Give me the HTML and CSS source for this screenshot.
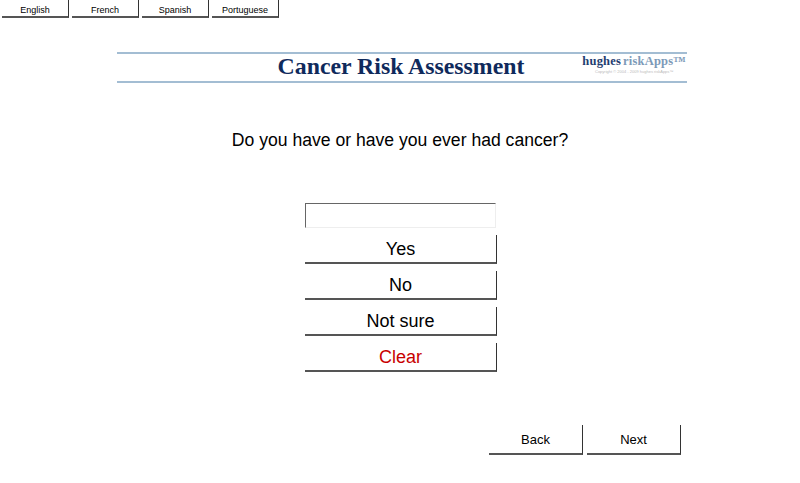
FILE: index.html
```html
<!DOCTYPE html>
<html lang="en">
<head>
    <meta charset="UTF-8">
    <meta name="viewport" content="width=device-width, initial-scale=1.0">
    <title>Cancer Risk Assessment</title>
    <link rel="stylesheet" href="styles.css">
</head>
<body>

    <div class="languages">
        <button class="lang">English</button>
        <button class="lang">French</button>
        <button class="lang">Spanish</button>
        <button class="lang">Portuguese</button>
    </div>

    <div class="banner">
        <h1 class="title">Cancer Risk Assessment</h1>
        <div class="logo">
            <div class="logo-name"><span class="logo-dark">hughes</span><span class="logo-light">riskApps™</span></div>
            <div class="logo-copy">Copyright © 2004 - 2009 hughes riskApps™</div>
        </div>
    </div>

    <p class="question">Do you have or have you ever had cancer?</p>

    <div class="answers">
        <input type="text" class="answer-box" disabled>
        <button class="answer">Yes</button>
        <button class="answer">No</button>
        <button class="answer">Not sure</button>
        <button class="answer clear">Clear</button>
    </div>

    <div class="nav">
        <button class="nav-btn">Back</button>
        <button class="nav-btn">Next</button>
    </div>

</body>
</html>
```

FILE: styles.css
```css
body {
    margin: 0;
    background: white;
    font-family: "Liberation Sans", Arial, sans-serif;
    color: black;
}
button {
    background: white;
    border: none;
    border-right: 1px solid #333;
    border-bottom: 2px solid #555;
    padding: 0;
    font-family: inherit;
    color: black;
}
.languages {
    display: flex;
    gap: 3px;
    padding-left: 2px;
}
.lang {
    width: 67px;
    height: 18px;
    padding-top: 3px;
    font-size: 9px;
}
.banner {
    position: relative;
    width: 570px;
    height: 27px;
    margin: 34px 0 0 117px;
    border-top: 2px solid #a3bdd3;
    border-bottom: 2px solid #a3bdd3;
    display: flex;
    justify-content: center;
    align-items: center;
}
.title {
    margin: 0 2px 2px 0;
    font-family: "Liberation Serif", Georgia, serif;
    font-size: 23.8px;
    font-weight: bold;
    color: #0f2a5c;
}
.logo {
    position: absolute;
    right: 1px;
    top: 0;
    text-align: center;
}
.logo-name {
    font-family: "Liberation Serif", Georgia, serif;
    font-size: 12.5px;
    font-weight: bold;
    letter-spacing: 0.2px;
    line-height: 15px;
}
.logo-dark {
    margin-right: 2px;
    color: #1f3d70;
}
.logo-light { color: #7d9ab8; }
.logo-copy {
    font-size: 4px;
    line-height: 5px;
    color: #bbb;
}
.question {
    margin: 45px 0 0;
    text-align: center;
    font-size: 17.6px;
    line-height: 24px;
}
.answers {
    display: flex;
    flex-direction: column;
    gap: 7px;
    width: 192px;
    margin: 51px 0 0 305px;
}
.answer-box {
    box-sizing: border-box;
    width: 191px;
    height: 25px;
    margin: 0;
    background: white;
    border: 1px solid #eee;
    border-top: 1px solid #666;
    border-left: 1px solid #666;
}
.answer {
    height: 29px;
    padding-top: 2px;
    font-size: 18px;
}
.clear { color: #c80000; }
.nav {
    display: flex;
    gap: 4px;
    width: 192px;
    margin: 53px 0 0 489px;
}
.nav-btn {
    width: 94px;
    height: 30px;
    padding-top: 1px;
    font-size: 13px;
}
```
